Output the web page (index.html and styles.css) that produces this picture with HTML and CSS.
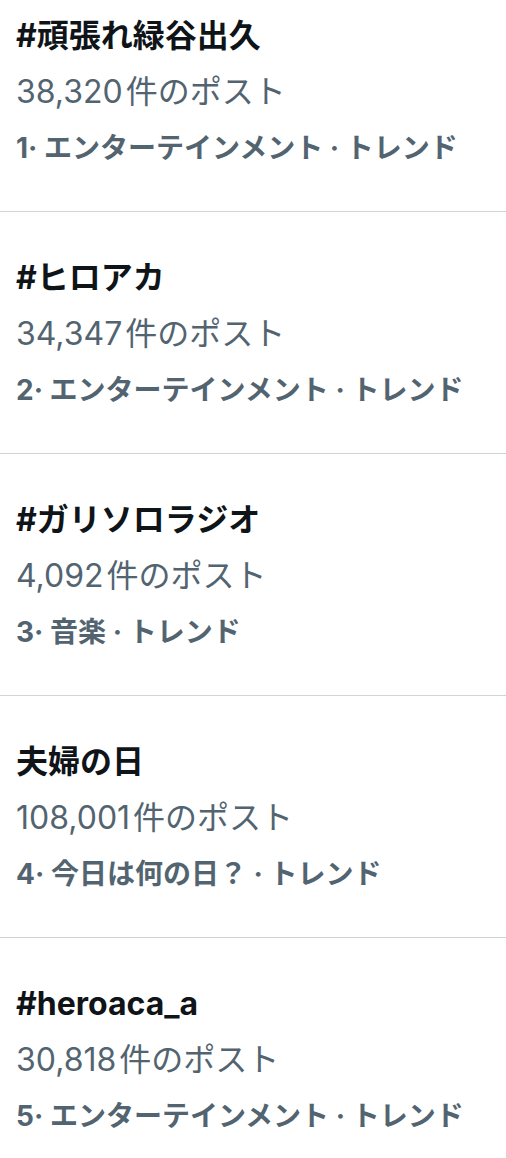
FILE: index.html
```html
<!DOCTYPE html>
<html lang="ja">
<head>
<meta charset="utf-8">
<link rel="stylesheet" href="styles.css">
</head>
<body>
<ul class="trends">
  <li class="trend">
    <div class="title">#頑張れ緑谷出久</div>
    <div class="count"><span class="num">38,320</span>件のポスト</div>
    <div class="meta">1· エンターテインメント · トレンド</div>
  </li>
  <li class="trend">
    <div class="title">#ヒロアカ</div>
    <div class="count"><span class="num">34,347</span>件のポスト</div>
    <div class="meta">2· エンターテインメント · トレンド</div>
  </li>
  <li class="trend">
    <div class="title">#ガリソロラジオ</div>
    <div class="count"><span class="num">4,092</span>件のポスト</div>
    <div class="meta">3· 音楽 · トレンド</div>
  </li>
  <li class="trend">
    <div class="title">夫婦の日</div>
    <div class="count"><span class="num">108,001</span>件のポスト</div>
    <div class="meta">4· 今日は何の日？ · トレンド</div>
  </li>
  <li class="trend">
    <div class="title">#heroaca_a</div>
    <div class="count"><span class="num">30,818</span>件のポスト</div>
    <div class="meta">5· エンターテインメント · トレンド</div>
  </li>
</ul>
</body>
</html>
```
FILE: styles.css
```css
html, body {
  margin: 0;
  padding: 0;
  background: #ffffff;
}
body {
  font-family: Inter, "Noto Sans CJK JP", sans-serif;
  width: 506px;
}
.trends {
  list-style: none;
  margin: 0;
  padding: 0;
}
.trend {
  padding: 38px 0 35px 16px;
  border-bottom: 1px solid #cfd4d8;
}
.trend:first-child {
  padding-top: 8px;
}
.trend:last-child {
  border-bottom: none;
}
.title {
  font-size: 32px;
  font-weight: 700;
  color: #0f1419;
  line-height: 56px;
  white-space: nowrap;
}
.count {
  font-size: 32px;
  font-weight: 400;
  color: #536471;
  line-height: 56px;
  white-space: nowrap;
}
.num {
  margin-right: 3px;
}
.meta {
  font-size: 28px;
  font-weight: 700;
  color: #536471;
  line-height: 56px;
  white-space: nowrap;
}
```
